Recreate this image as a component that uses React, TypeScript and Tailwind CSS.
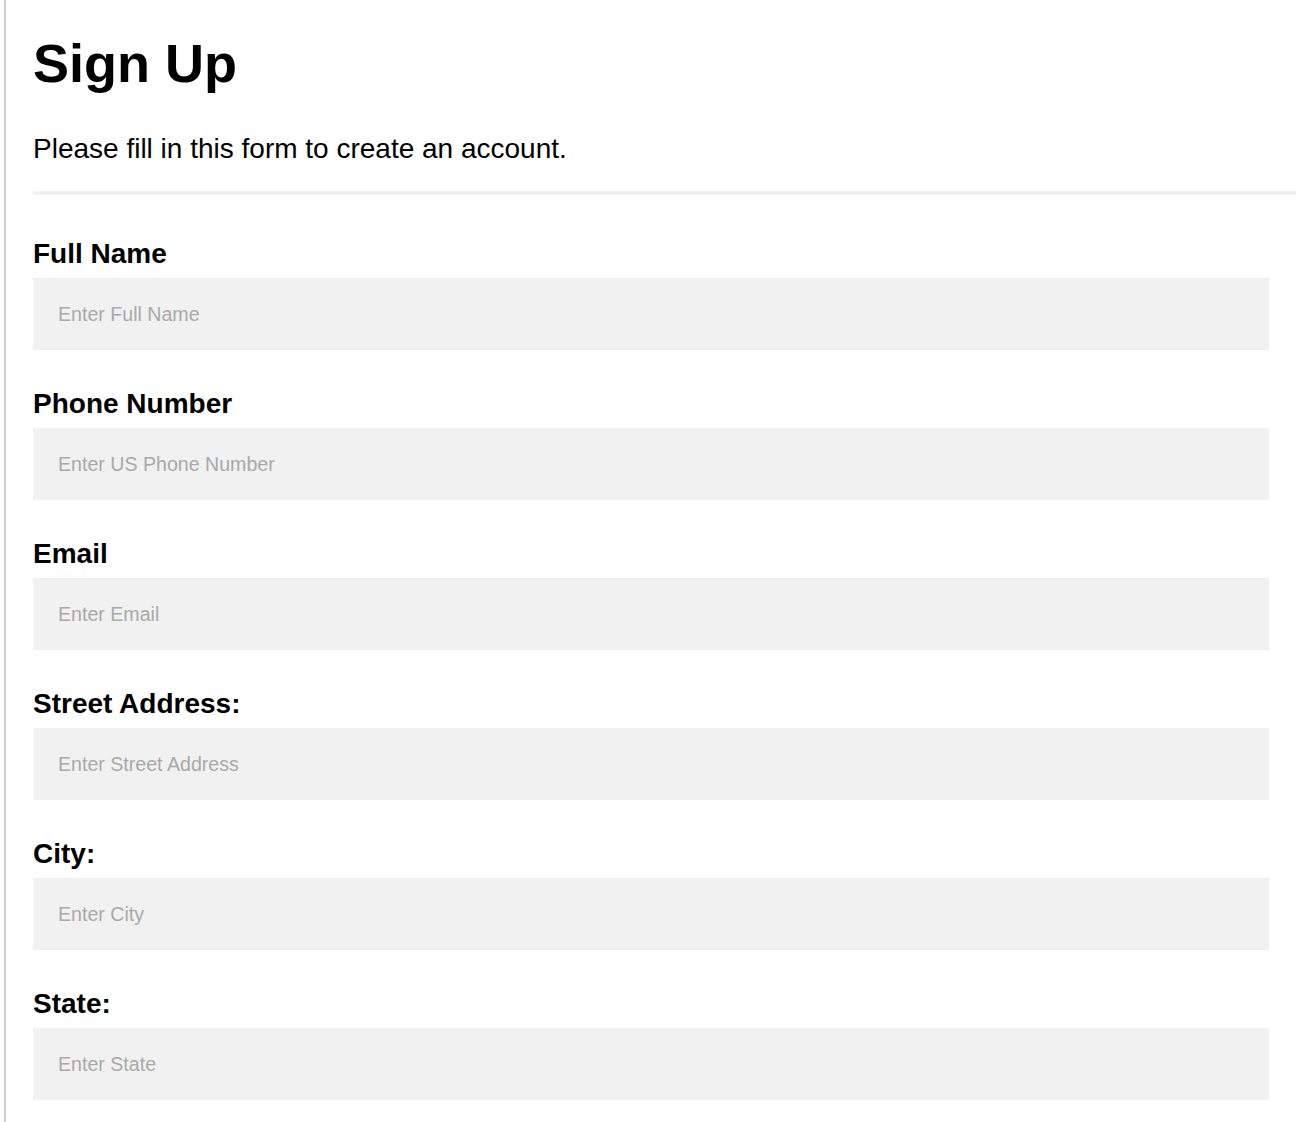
import React from 'react';

const fields = [
  { label: 'Full Name', placeholder: 'Enter Full Name' },
  { label: 'Phone Number', placeholder: 'Enter US Phone Number' },
  { label: 'Email', placeholder: 'Enter Email' },
  { label: 'Street Address:', placeholder: 'Enter Street Address' },
  { label: 'City:', placeholder: 'Enter City' },
  { label: 'State:', placeholder: 'Enter State' },
];

const App = () => {
  return (
    <div className="h-[1122px] overflow-hidden bg-white font-['Liberation_Sans',Arial,sans-serif] text-black">
      <div className="ml-[4px] h-full border-l-2 border-[#cfcfcf] pl-[27px] pt-[32px]">
        <h1 className="text-[54px] font-bold leading-[62px]">Sign Up</h1>
        <p className="mt-[39px] text-[28px] leading-[32px]">Please fill in this form to create an account.</p>
        <div className="mt-[26px] h-[4px] bg-[#f1f1f1]"></div>

        <form className="mt-[43px] w-[1236px]">
          {fields.map((field, index) => (
            <div key={index} className="mb-[38px]">
              <label className="mb-[8px] block text-[28px] font-bold leading-[32px]">{field.label}</label>
              <input
                type="text"
                placeholder={field.placeholder}
                className="block h-[72px] w-full bg-[#f1f1f1] pl-[25px] text-[19.6px] outline-none placeholder:text-[#a9a9a9]"
              />
            </div>
          ))}
        </form>
      </div>
    </div>
  );
};

export default App;
